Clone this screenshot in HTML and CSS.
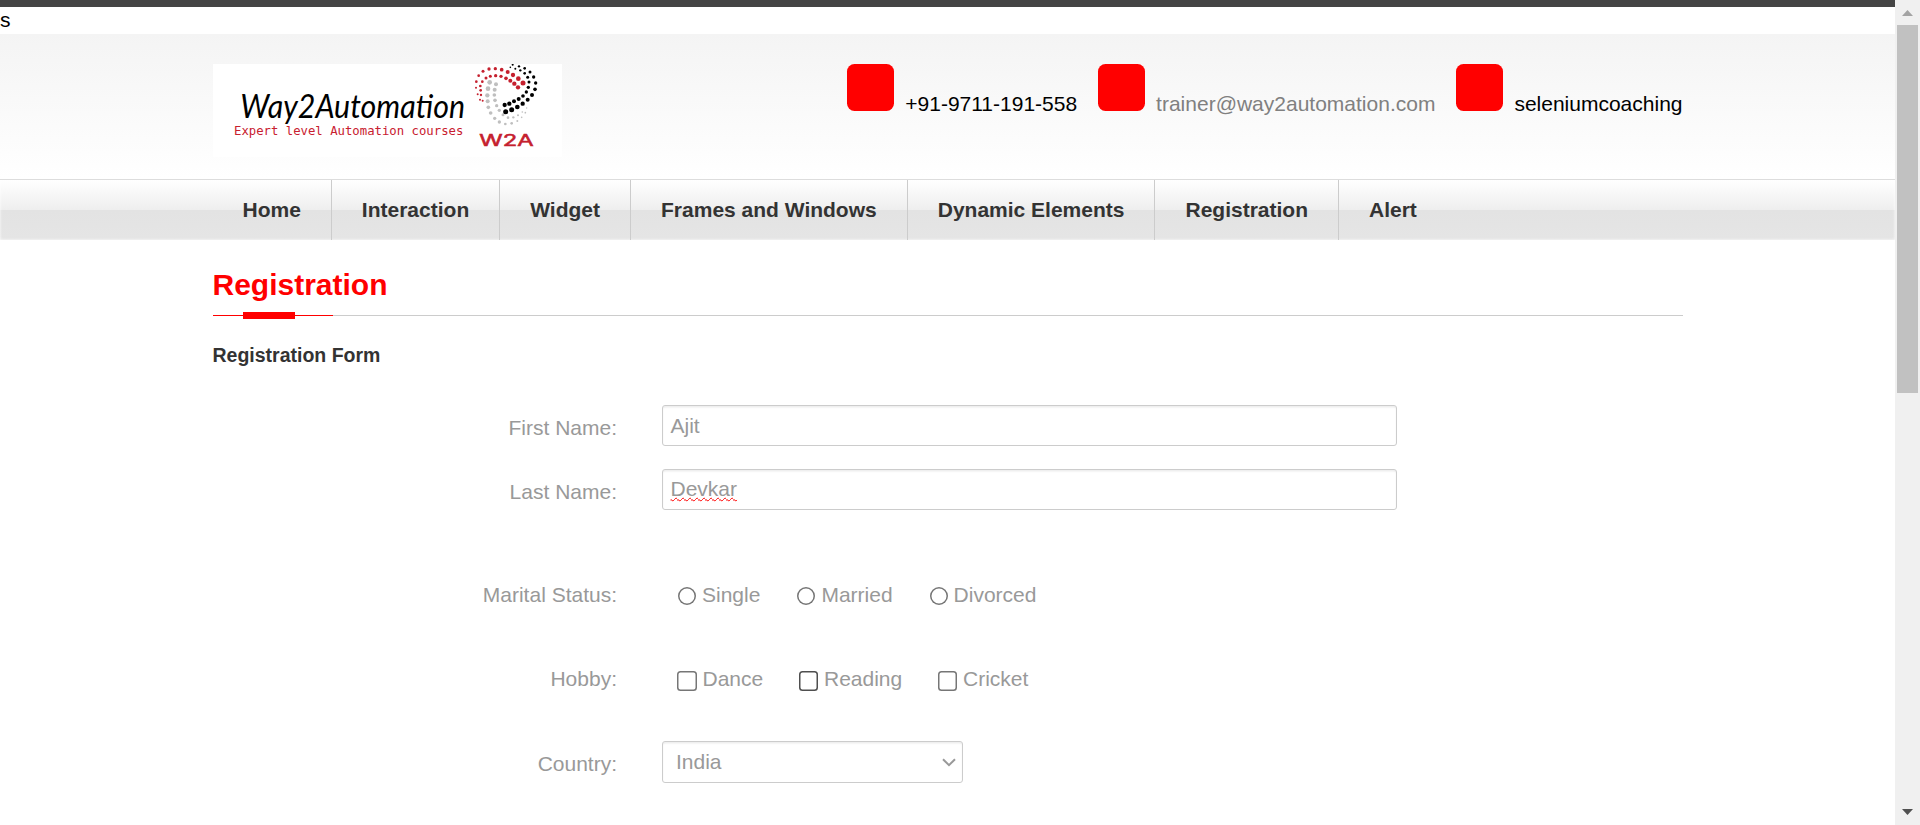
FILE: index.html
```html
<!DOCTYPE html>
<html lang="en">
<head>
<meta charset="utf-8">
<title>Registration</title>
<link rel="stylesheet" href="styles.css">
</head>
<body>
<div class="page">
  <div class="topbar"></div>
  <div class="stray">s</div>
  <header class="header">
    <div class="container header-row">
      <svg class="logo" viewBox="39 27 1047 279">
        <rect x="39" y="27" width="1047" height="279" fill="#fff"/>
        <text class="logo-name" x="121" y="189" textLength="674" lengthAdjust="spacingAndGlyphs">Way2Automation</text>
        <text class="logo-tag" x="102" y="241" textLength="688" lengthAdjust="spacingAndGlyphs">Expert level Automation courses</text>
        <text class="logo-mark" x="838" y="274" textLength="163" lengthAdjust="spacingAndGlyphs">W2A</text>
        <g id="dots"></g>
      </svg>
      <div class="contacts">
        <div class="contact"><span class="badge"></span><span>+91-9711-191-558</span></div>
        <div class="contact mail"><span class="badge"></span><span>trainer@way2automation.com</span></div>
        <div class="contact"><span class="badge"></span><span>seleniumcoaching</span></div>
      </div>
    </div>
  </header>
  <nav class="nav">
    <div class="container nav-row">
      <a>Home</a><a>Interaction</a><a>Widget</a><a>Frames and Windows</a><a>Dynamic Elements</a><a>Registration</a><a>Alert</a>
    </div>
  </nav>
  <main class="container">
    <h1>Registration</h1>
    <div class="rule"><div class="rule-red"><div class="rule-block"></div></div></div>
    <h2>Registration Form</h2>
    <div class="row"><div class="label">First Name:</div><div class="field"><span>Ajit</span></div></div>
    <div class="row last"><div class="label">Last Name:</div><div class="field"><span class="misspelt">Devkar</span></div></div>
    <div class="row marital"><div class="label">Marital Status:</div>
      <div class="options"><label><i class="radio"></i>Single</label><label><i class="radio"></i>Married</label><label><i class="radio"></i>Divorced</label></div></div>
    <div class="row hobby"><div class="label">Hobby:</div>
      <div class="options"><label><i class="check"></i>Dance</label><label><i class="check hover"></i>Reading</label><label><i class="check"></i>Cricket</label></div></div>
    <div class="row country"><div class="label">Country:</div>
      <div class="field select"><span>India</span><svg width="14" height="9" viewBox="0 0 14 9"><path d="M1 1.2 7 7.2 13 1.2" fill="none" stroke="#999" stroke-width="2"/></svg></div></div>
  </main>
</div>
<aside class="scrollbar">
  <svg width="11" height="6" viewBox="0 0 11 6"><path d="M0 6 5.5 0 11 6Z" fill="#a3a3a3"/></svg>
  <div class="thumb"></div>
  <svg class="down" width="11" height="6" viewBox="0 0 11 6"><path d="M0 0H11L5.5 6Z" fill="#505050"/></svg>
</aside>
<script src="logo.js"></script>
</body>
</html>
```
FILE: logo.js
```js
// Dots of the logo swirl: [x, y, radius] per colour.
const swirl = {
  "#c5202e": [[828,98,3],[829,80,4],[836,62,4],[849,49,4.5],[867,42,5],[886,41,5],[905,44,5.5],[923,51,6],[939,60,6.5],[955,71,7],[969,84,7.5],[848,137,3],[833,118,3],[840,134,3],[843,120,3.5],[842,106,4],[841,93,4],[847,80,4],[858,69,4.5],[871,64,4.5],[887,62,5],[903,64,5],[918,70,5.5],[931,77,6],[943,86,6.5],[954,97,6.5]],
  "#bfbfbf": [[869,82,7],[864,101,7],[862,121,6.5],[863,139,6],[865,157,5.5],[872,174,5.5],[884,190,5],[898,201,5],[916,207,4],[935,205,4],[952,198,3],[965,187,2.5],[976,173,2.5],[980,159,2],[888,88,6],[884,104,6],[883,120,5.5],[885,136,5.5],[890,152,5],[898,166,5],[909,179,4.5],[924,188,4],[940,187,3.5],[954,181,3],[967,171,2.5]],
  "#000": [[938,29,3],[957,34,3.5],[974,40,4],[990,51,4.5],[1001,66,5],[1007,84,5],[1005,103,5.5],[996,120,6],[983,134,6],[968,146,6.5],[952,156,7],[935,164,7.5],[917,170,7.5],[931,37,2.5],[946,41,3],[961,46,3.5],[974,55,4],[983,67,4.5],[987,81,4.5],[985,97,5],[979,111,5],[969,123,5.5],[956,132,6],[942,139,6],[928,146,6.5],[914,150,6.5]]
};
const dots = document.getElementById("dots");
for (const [color, list] of Object.entries(swirl)) {
  for (const [x, y, r] of list) {
    const c = document.createElementNS("http://www.w3.org/2000/svg", "circle");
    c.setAttribute("cx", x);
    c.setAttribute("cy", y);
    c.setAttribute("r", r);
    c.setAttribute("fill", color);
    dots.appendChild(c);
  }
}
```
FILE: styles.css
```css
* { box-sizing: border-box; }
body {
  margin: 0;
  display: flex;
  height: 825px;
  overflow: hidden;
  background: #fff;
  font: 21px/30px "Liberation Sans", Arial, sans-serif;
  color: #000;
}
.page { width: 1895px; }
.container { width: 1470px; margin-left: 212.5px; }
.topbar { height: 7px; background: #444; }
.stray { height: 27px; line-height: 25px; }
.header { height: 145px; padding-top: 30px; background: linear-gradient(#f4f4f4, #fff); }
.header-row { display: flex; justify-content: space-between; align-items: flex-start; }
.logo { width: 349px; height: 93px; margin-left: 0.5px; }
.logo-name { font: italic 100px "Lato", sans-serif; fill: #000; }
.logo-tag { font: 38px "DejaVu Sans Mono", monospace; fill: #c8202f; }
.logo-mark { font: 47px "Inter", sans-serif; fill: #c5202e; stroke: #c5202e; stroke-width: 1.5px; }
.contacts { display: flex; gap: 20.5px; }
.contact { display: flex; align-items: baseline; gap: 11.5px; }
.mail { color: #808080; }
.badge { width: 47px; height: 47px; border-radius: 7.5px; background: #f00; }
.nav {
  height: 61px;
  border-top: 1px solid #ddd;
  background: linear-gradient(#fff 0, #eee 30px, #e3e3e3 30px, #e5e5e5 60px);
  box-shadow: inset 0 0 3px #fff;
}
.nav-row { display: flex; }
.nav a { padding: 0 30px; line-height: 60px; font-weight: bold; color: #333; border-right: 1px solid #ccc; }
.nav a:last-child { border: 0; }
h1 { margin: 0; padding-top: 27px; height: 75px; font-size: 30px; line-height: 36px; color: #f00; }
.rule { height: 1px; background: #ccc; }
.rule-red { width: 120px; height: 1px; background: #f00; display: flex; align-items: center; }
.rule-block { flex: none; width: 52px; height: 7px; margin-left: 30px; background: #f00; }
h2 { margin: 0; padding-top: 24px; height: 89px; font-size: 19.5px; line-height: 30px; color: #333; }
.row { display: grid; grid-template-columns: 404.5px 735px; column-gap: 45px; color: #999; }
.label { text-align: right; }
.row:has(.field) .label { padding-top: 8px; }
.field {
  height: 41px;
  padding-left: 7.5px;
  border: 1px solid #ccc;
  border-radius: 3px;
  box-shadow: inset 0 1.5px 1.5px rgba(0, 0, 0, .075);
  line-height: 39px;
}
.misspelt { text-decoration: underline wavy #f00 1px; text-underline-offset: 1px; text-decoration-skip-ink: none; }
.last { margin-top: 23px; }
.last .field { line-height: 37px; }
.marital { margin-top: 70px; }
.hobby { margin-top: 54px; }
.country { margin-top: 47px; }
.options { display: flex; padding-left: 15px; gap: 35.3px; }
.marital .options { gap: 36px; }
.options label { display: flex; }
.radio { width: 18px; height: 18px; margin: 7px 6px 0 1px; box-shadow: inset 0 0 0 1.5px #767676; border-radius: 50%; }
.check { width: 19.5px; height: 19.5px; margin: 7px 6px 0 0; box-shadow: inset 0 0 0 1.5px #767676; border-radius: 3.5px; }
.check.hover { box-shadow: inset 0 0 0 1.5px #4f4f4f; }
.select { width: 301px; height: 42px; padding: 0 6px 0 13px; line-height: 40px; display: flex; justify-content: space-between; align-items: center; }
.select span { height: 40px; }
.scrollbar { width: 25px; height: 825px; background: #f0f0f0; display: flex; flex-direction: column; align-items: center; padding: 10px 0; }
.thumb { width: 21px; height: 368px; margin-top: 9px; background: #c1c1c1; }
.down { margin-top: auto; }
```
